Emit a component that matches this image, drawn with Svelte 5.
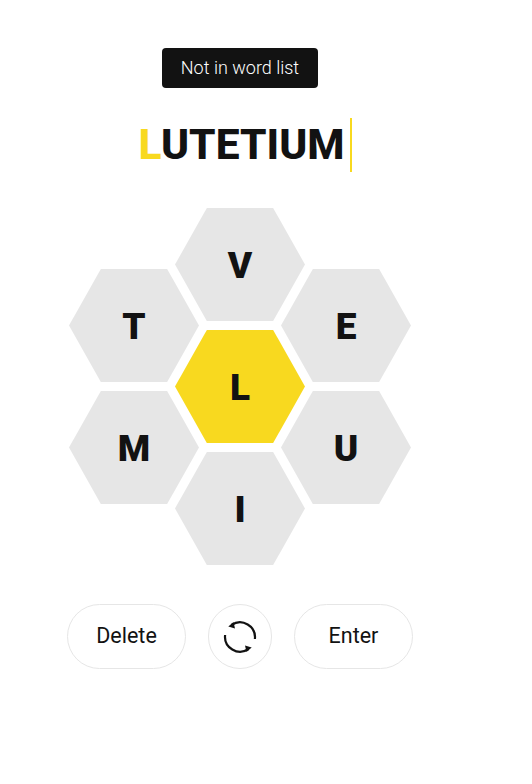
<script>
  const columns = [
    [{ l: 'T' }, { l: 'M' }],
    [{ l: 'V' }, { l: 'L', center: true }, { l: 'I' }],
    [{ l: 'E' }, { l: 'U' }]
  ];
</script>

<main class="game">
  <div class="toast">Not in word list</div>
  <div class="input">
    <span class="word"><span class="key">L</span>UTETIUM</span><span class="caret"></span>
  </div>
  <div class="hive">
    {#each columns as col}
      <div class="col">
        {#each col as cell}
          <div class="hex" class:center={cell.center}>{cell.l}</div>
        {/each}
      </div>
    {/each}
  </div>
  <div class="controls">
    <button class="pill">Delete</button>
    <button class="round" aria-label="Shuffle">
      <svg class="shuffle" width="36" height="36" viewBox="0 0 36 36" fill="none" stroke="#121212" stroke-width="2.2">
        <path d="M9.5 6 A15 15 0 0 1 32.9 20" />
        <path d="M26.5 30 A15 15 0 0 1 3.1 16" />
        <path d="M6.3 7.5 L11.5 3 L13 9.5 Z" fill="#121212" stroke="none" />
        <path d="M29.7 28.5 L24.5 33 L23 26.5 Z" fill="#121212" stroke="none" />
      </svg>
    </button>
    <button class="pill">Enter</button>
  </div>
</main>

<style>
  :global(body) {
    margin: 0;
    background: #fff;
  }
  .game {
    width: 480px;
    display: flex;
    flex-direction: column;
    align-items: center;
    padding-top: 48px;
    color: #121212;
    font-family: "Roboto", "Liberation Sans", sans-serif;
  }
  .toast {
    width: 156px;
    height: 40px;
    box-sizing: border-box;
    padding-bottom: 2px;
    display: flex;
    align-items: center;
    justify-content: center;
    background: #121212;
    color: #fff;
    border-radius: 4px;
    font-size: 18px;
    font-weight: 300;
  }
  .input {
    position: relative;
    margin-top: 30px;
    padding-left: 3px;
    height: 54px;
    display: flex;
    align-items: center;
    font-size: 42.5px;
    font-weight: 800;
    line-height: 54px;
  }
  .key {
    color: #f8d91f;
  }
  .caret {
    position: absolute;
    right: -7px;
    top: 0;
    width: 2px;
    height: 54px;
    background: #f8d91f;
  }
  .hive {
    margin-top: 36px;
    display: flex;
    justify-content: center;
    align-items: center;
  }
  .col {
    display: flex;
    flex-direction: column;
    gap: 9px;
    margin: 0 -12px;
  }
  .hex {
    width: 130px;
    height: 113px;
    box-sizing: border-box;
    padding-top: 1px;
    display: flex;
    align-items: center;
    justify-content: center;
    background: #e6e6e6;
    clip-path: polygon(24.5% 0, 75.5% 0, 100% 50%, 75.5% 100%, 24.5% 100%, 0 50%);
    font-size: 37px;
    font-weight: 900;
  }
  .hex.center {
    background: #f8d91f;
  }
  .controls {
    margin-top: 39px;
    display: flex;
    gap: 22px;
    align-items: center;
  }
  button {
    height: 65px;
    box-sizing: border-box;
    padding: 0 0 2px;
    background: #fff;
    border: 1px solid #e6e6e6;
    border-radius: 33px;
    color: #121212;
    font-family: "Roboto", sans-serif;
    font-size: 21.5px;
    display: flex;
    align-items: center;
    justify-content: center;
  }
  .pill {
    width: 119px;
  }
  .round {
    width: 64px;
    padding: 0;
  }
</style>
